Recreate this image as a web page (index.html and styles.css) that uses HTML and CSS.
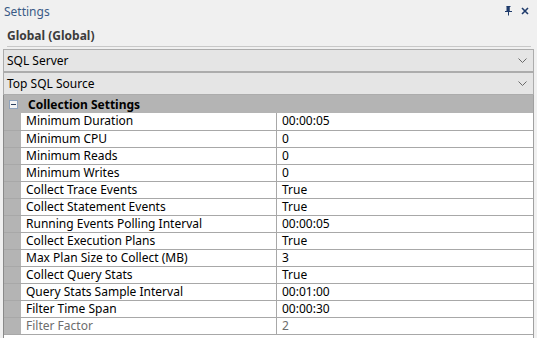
FILE: index.html
```html
<!DOCTYPE html>
<html>
<head>
<meta charset="utf-8">
<link rel="stylesheet" href="styles.css">
</head>
<body>
<div class="panel">
  <div class="titlebar">
    <span class="title">Settings</span>
    <span class="tools">
      <svg class="pin" width="7" height="10" viewBox="0 0 7 10"><path d="M1.5 0.5h4M2 0.5v5M4 0.5v5M0 5.5h7M3.5 5.5v4" stroke="#1f3b6b" stroke-width="1" fill="none"/><rect x="2" y="0.5" width="2.5" height="5" fill="#1f3b6b"/></svg>
      <svg class="close" width="8" height="8" viewBox="0 0 8 8"><path d="M1 1L7 7M7 1L1 7" stroke="#1f3b6b" stroke-width="1.6"/></svg>
    </span>
  </div>
  <div class="heading">Global (Global)</div>
  <div class="combo"><span>SQL Server</span><svg class="chev" width="9" height="5" viewBox="0 0 9 5"><path d="M0.5 0.5L4.5 4.5L8.5 0.5" stroke="#6a6a6a" fill="none"/></svg></div>
  <div class="combo second"><span>Top SQL Source</span><svg class="chev" width="9" height="5" viewBox="0 0 9 5"><path d="M0.5 0.5L4.5 4.5L8.5 0.5" stroke="#6a6a6a" fill="none"/></svg></div>
  <div class="grid">
    <div class="cat">
      <span class="toggle"><span class="dash"></span></span>
      <span class="catname">Collection Settings</span>
    </div>
    <div class="row first"><div class="gut"></div><div class="name">Minimum Duration</div><div class="val">00:00:05</div></div>
    <div class="row"><div class="gut"></div><div class="name">Minimum CPU</div><div class="val">0</div></div>
    <div class="row"><div class="gut"></div><div class="name">Minimum Reads</div><div class="val">0</div></div>
    <div class="row"><div class="gut"></div><div class="name">Minimum Writes</div><div class="val">0</div></div>
    <div class="row"><div class="gut"></div><div class="name">Collect Trace Events</div><div class="val">True</div></div>
    <div class="row"><div class="gut"></div><div class="name">Collect Statement Events</div><div class="val">True</div></div>
    <div class="row"><div class="gut"></div><div class="name">Running Events Polling Interval</div><div class="val">00:00:05</div></div>
    <div class="row"><div class="gut"></div><div class="name">Collect Execution Plans</div><div class="val">True</div></div>
    <div class="row"><div class="gut"></div><div class="name">Max Plan Size to Collect (MB)</div><div class="val">3</div></div>
    <div class="row"><div class="gut"></div><div class="name">Collect Query Stats</div><div class="val">True</div></div>
    <div class="row"><div class="gut"></div><div class="name">Query Stats Sample Interval</div><div class="val">00:01:00</div></div>
    <div class="row"><div class="gut"></div><div class="name">Filter Time Span</div><div class="val">00:00:30</div></div>
    <div class="row last disabled"><div class="gut"></div><div class="name">Filter Factor</div><div class="val">2</div></div>
    <div class="filler"></div>
  </div>
</div>
</body>
</html>
```

FILE: styles.css
```css
html, body {
  margin: 0;
  padding: 0;
  background: #f0f0f0;
}
body {
  width: 537px;
  height: 338px;
  overflow: hidden;
  font-family: "Noto Sans", "Open Sans", sans-serif;
  font-size: 12px;
  color: #000;
}
.panel {
  display: flex;
  flex-direction: column;
  height: 338px;
}
.titlebar {
  height: 23px;
  display: flex;
  align-items: center;
  justify-content: space-between;
  padding-left: 4px;
  padding-right: 8px;
  padding-bottom: 1px;
  box-sizing: border-box;
}
.title {
  color: #3a5a86;
}
.tools {
  display: flex;
  align-items: center;
  gap: 9px;
}
.heading {
  margin: 0 6px 2px 7px;
  height: 24px;
  padding-top: 4px;
  line-height: 18px;
  box-sizing: border-box;
  font-weight: bold;
  color: #3c3c3c;
  border-bottom: 1px solid #c8c8c8;
}
.combo {
  margin: 0 3px;
  height: 23px;
  border: 1px solid #acacac;
  background: #e5e5e5;
  display: flex;
  align-items: center;
  justify-content: space-between;
  padding: 0 6px 0 3px;
  box-sizing: border-box;
}
.grid {
  margin-left: 3px;
  width: 531px;
  flex: 1;
  display: flex;
  flex-direction: column;
  background: #fff;
  border-left: 1px solid #8a8a8a;
  border-right: 1px solid #a0a0a0;
  box-sizing: border-box;
}
.cat {
  height: 18px;
  background: #b4b4b4;
  display: flex;
  align-items: center;
  font-weight: bold;
}
.toggle {
  width: 7px;
  height: 7px;
  margin-left: 5px;
  margin-right: 10px;
  border: 1px solid #8fa3bd;
  background: #f4f4f4;
  display: flex;
  align-items: center;
  justify-content: center;
}
.dash {
  width: 5px;
  height: 1px;
  background: #2b3f5e;
}
.row {
  display: flex;
  height: 17px;
  border-top: 1px solid #a8a8a8;
  box-sizing: border-box;
  line-height: 16px;
}
.row.first {
  border-top: none;
}
.row.last {
  height: 18px;
  border-bottom: 1px solid #a8a8a8;
}
.gut {
  width: 17px;
  background: #b4b4b4;
  flex: none;
}
.name {
  width: 256px;
  padding-left: 5px;
  box-sizing: border-box;
  border-right: 1px solid #a8a8a8;
  flex: none;
  white-space: nowrap;
}
.val {
  padding-left: 5px;
  flex: 1;
}
.disabled .name, .disabled .val {
  color: #6d6d6d;
}
.filler {
  flex: 1;
}
```
